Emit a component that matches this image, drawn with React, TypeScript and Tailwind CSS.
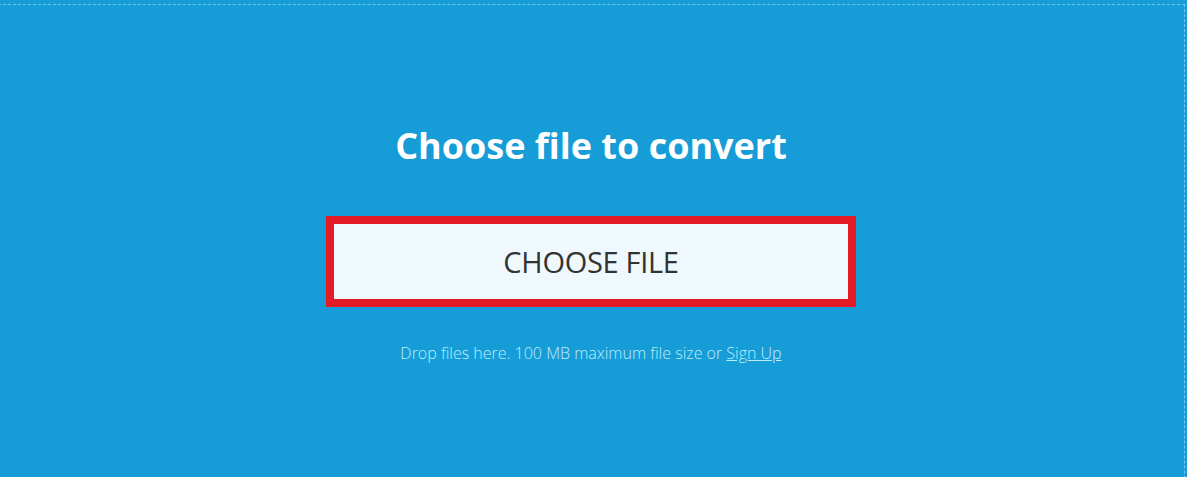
export default function App() {
  return (
    <div
      className="h-[477px] overflow-hidden bg-[#169dd8] pt-[4px] pr-[2px]"
      style={{ fontFamily: '"Open Sans", "Noto Sans", sans-serif' }}
    >
      {/* DROP ZONE */}
      <div className="-ml-[2px] h-[600px] border-t border-r border-dashed border-[#6cc6ee] flex flex-col items-center pt-[119px]">
        <h1 className="text-[36px] leading-[44px] font-bold text-white">
          Choose file to convert
        </h1>

        <button className="mt-[48px] w-[530px] h-[91px] border-[8px] border-[#e21b25] bg-[#eff9fd] text-[29px] text-[#333333] tracking-[-0.3px] pt-[1px]">
          CHOOSE FILE
        </button>

        <p className="mt-[34px] text-[16px] font-light text-[#bdeefa]">
          Drop files here. 100 MB maximum file size or{" "}
          <a href="#" className="underline">
            Sign Up
          </a>
        </p>
      </div>
    </div>
  );
}
